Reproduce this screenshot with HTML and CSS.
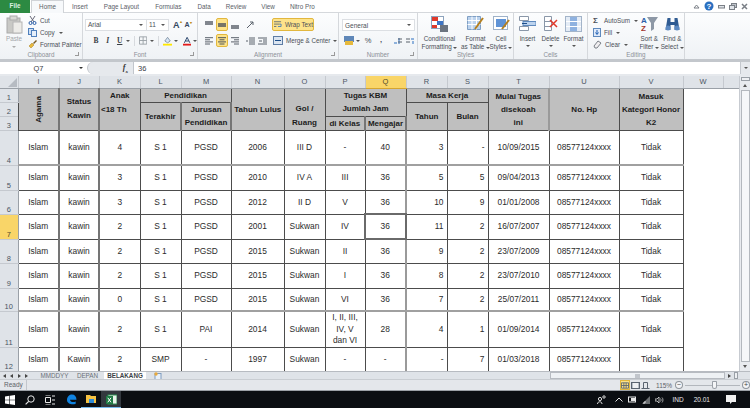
FILE: index.html
```html
<!DOCTYPE html>
<html lang="en">
<head>
<meta charset="utf-8">
<title>Microsoft Excel</title>
<link rel="stylesheet" href="styles.css">
</head>
<body>
<div class="app">
  <nav class="tabs">
    <span class="tab-file">File</span>
    <span class="tab-home">Home</span>
    <span class="tab t-insert">Insert</span>
    <span class="tab t-layout">Page Layout</span>
    <span class="tab t-formulas">Formulas</span>
    <span class="tab t-data">Data</span>
    <span class="tab t-review">Review</span>
    <span class="tab t-view">View</span>
    <span class="tab t-nitro">Nitro Pro</span>
    <span class="window-icons">
      <svg width="7" height="7" viewBox="0 0 7 7"><path d="M1 5 3.500 2 6 5z" fill="none" stroke="#7a7f86"/></svg>
      <svg width="10" height="10" viewBox="0 0 10 10"><circle cx="5" cy="5" r="4.500" fill="#2a6fc0"/><text x="5" y="7.800" class="help">?</text></svg>
      <svg width="7" height="7" viewBox="0 0 7 7"><rect x=".5" y="2.500" width="6" height="2.500" fill="#dfe3e8" stroke="#7a7f86"/></svg>
      <svg width="8" height="7" viewBox="0 0 8 7"><rect x="2.500" y=".5" width="5" height="4" fill="#bcc2c9" stroke="#7a7f86"/><rect x=".5" y="2.500" width="5" height="4" fill="#dfe3e8" stroke="#7a7f86"/></svg>
      <svg width="7" height="7" viewBox="0 0 7 7"><path d="M1 1 6 6M6 1 1 6" stroke="#7a7f86" stroke-width="1.500"/></svg>
    </span>
  </nav>

  <section class="ribbon">
    <div class="group g-clip">
      <div class="group-body clip-body">
        <div class="paste">
          <svg width="17" height="19" viewBox="0 0 17 19"><rect x="1" y="3" width="13" height="15" fill="#c9c9c6" stroke="#aaa"/><rect x="4" y="1" width="7" height="4" fill="#d9d9d6" stroke="#aaa"/><rect x="7" y="7" width="9" height="11" fill="#ecebe8" stroke="#b5b5b5"/></svg>
          <span class="paste-label">Paste</span>
          <span class="caret-gray"></span>
        </div>
        <div class="clip-list">
          <span class="clip-row"><svg width="9" height="9" viewBox="0 0 9 9"><path d="M2 0 6 6M7 0 3 6" stroke="#667" fill="none"/><circle cx="2.500" cy="7" r="1.500" fill="none" stroke="#2a5fa8"/><circle cx="6.500" cy="7" r="1.500" fill="none" stroke="#2a5fa8"/></svg>Cut</span>
          <span class="clip-row"><svg width="9" height="9" viewBox="0 0 9 9"><rect x=".5" y=".5" width="5" height="6" fill="#cfe0f5" stroke="#4f80bd"/><rect x="3.500" y="2.500" width="5" height="6" fill="#e6f0fb" stroke="#4f80bd"/></svg>Copy <i class="caret"></i></span>
          <span class="clip-row"><svg width="9" height="9" viewBox="0 0 9 9"><path d="M1 6 4 3 6 5 3 8z" fill="#e8b93c" stroke="#a77f20" stroke-width=".5"/><path d="M5 3 8 0 9 1 6 4z" fill="#7a5a20"/></svg>Format Painter</span>
        </div>
      </div>
      <div class="group-label">Clipboard<i class="launch"></i></div>
    </div>

    <div class="group g-font">
      <div class="group-body font-body">
        <div class="font-row">
          <span class="combo c-font">Arial<i class="caret"></i></span>
          <span class="combo c-size">11<i class="caret"></i></span>
          <span class="grow">A<sup>▴</sup></span>
          <span class="grow small">A<sup>▾</sup></span>
        </div>
        <div class="font-row fmt-row">
          <b class="fmt">B</b><em class="fmt">I</em><span class="fmt under">U</span><i class="caret"></i>
          <span class="vsep"></span>
          <svg class="b-icon" width="9" height="9" viewBox="0 0 9 9"><path d="M.5.5h8v8h-8zM4.500.5v8M.5 4.500h8" fill="none" stroke="#9aa0a6"/></svg><i class="caret"></i>
          <span class="vsep"></span>
          <svg class="fill-icon" width="10" height="10" viewBox="0 0 10 10"><path d="M2 5 5 1 8 5 5 7z" fill="#d8e6f5" stroke="#5c6f86" stroke-width=".7"/><rect y="8" width="10" height="2" fill="#ffe800"/></svg><i class="caret"></i>
          <svg class="color-icon" width="9" height="10" viewBox="0 0 9 10"><path d="M1.500 7 4.500 1 7.500 7M2.800 5h3.400" fill="none" stroke="#1f3b64"/><rect y="8" width="9" height="2" fill="#e31b1b"/></svg><i class="caret"></i>
        </div>
      </div>
      <div class="group-label">Font<i class="launch"></i></div>
    </div>

    <div class="group g-align">
      <div class="group-body align-body">
        <div class="align-grid">
          <span class="al"><svg width="8" height="8" viewBox="0 0 8 8"><path d="M0 1h8M0 3h8" stroke="#59606a" stroke-width="1.500"/></svg></span>
          <span class="al on"><svg width="8" height="8" viewBox="0 0 8 8"><path d="M0 3h8M0 5h8" stroke="#4b525c" stroke-width="1.500"/></svg></span>
          <span class="al"><svg width="8" height="8" viewBox="0 0 8 8"><path d="M0 5h8M0 7h8" stroke="#59606a" stroke-width="1.500"/></svg></span>
          <span class="al"><svg width="8" height="8" viewBox="0 0 8 8"><path d="M0 .7h8M0 2.800h5M0 4.900h8M0 7h5" stroke="#59606a"/></svg></span>
          <span class="al on"><svg width="8" height="8" viewBox="0 0 8 8"><path d="M0 .7h8M1.500 2.800h5M0 4.900h8M1.500 7h5" stroke="#4b525c"/></svg></span>
          <span class="al"><svg width="8" height="8" viewBox="0 0 8 8"><path d="M0 .7h8M3 2.800h5M0 4.900h8M3 7h5" stroke="#59606a"/></svg></span>
        </div>
        <div class="align-mid">
          <svg width="9" height="8" viewBox="0 0 9 8"><path d="M1 7 7 1M4 1h3v3" fill="none" stroke="#59606a"/></svg>
          <div class="indent-row">
            <svg width="9" height="8" viewBox="0 0 9 8"><path d="M3 1h6M3 3h6M3 5h6M3 7h6M0 4h2" stroke="#59606a"/></svg>
            <svg width="9" height="8" viewBox="0 0 9 8"><path d="M0 1h9M5 3h4M5 5h4M0 7h9M1 4h3" stroke="#59606a"/></svg>
          </div>
        </div>
        <div class="wrap-col">
          <span class="wrap on-wide"><svg width="10" height="9" viewBox="0 0 10 9"><path d="M0 1h9M0 4h7M0 7h3" stroke="#4b5b70"/><path d="M7 4h2v3H5" fill="none" stroke="#2a6fc0"/></svg>Wrap Text</span>
          <span class="wrap"><svg width="10" height="9" viewBox="0 0 10 9"><rect x=".5" y=".5" width="9" height="8" fill="#dbe5f1" stroke="#5e7da5"/><path d="M2 4.500h6" stroke="#1d4e89"/></svg>Merge &amp; Center <i class="caret"></i></span>
        </div>
      </div>
      <div class="group-label">Alignment<i class="launch"></i></div>
    </div>

    <div class="group g-number">
      <div class="group-body num-body">
        <span class="combo c-num">General<i class="caret"></i></span>
        <div class="num-row">
          <svg width="10" height="9" viewBox="0 0 10 9"><rect width="10" height="6" fill="#5f87b8"/><rect x="1" y="5" width="8" height="4" fill="#e6b93d"/></svg><i class="caret"></i>
          <span class="sym">%</span>
          <span class="sym comma">,</span>
          <svg class="dec" width="9" height="8" viewBox="0 0 9 8"><path d="M1 6h3M6 1v6" stroke="#2a6fc0"/><path d="M5 2h4M5 5h4" stroke="#59606a"/></svg>
          <svg class="dec2" width="9" height="8" viewBox="0 0 9 8"><path d="M0 2h4M0 5h4" stroke="#59606a"/><path d="M5 2h3M7 4v3" stroke="#2a6fc0"/></svg>
        </div>
      </div>
      <div class="group-label">Number<i class="launch"></i></div>
    </div>

    <div class="group g-styles">
      <div class="group-body big-body">
        <div class="big b-cond">
          <svg width="17" height="16" viewBox="0 0 17 16"><rect x=".5" y=".5" width="12" height="12" fill="#fff" stroke="#8da3bd"/><rect x="1" y="1" width="6" height="4" fill="#e0392b"/><rect x="6" y="5" width="6" height="4" fill="#3d74c4"/><rect x="1" y="9" width="5" height="3" fill="#e0392b"/><rect x="9" y="9" width="8" height="7" fill="#6c7480"/></svg>
          <span>Conditional</span><span>Formatting <i class="caret"></i></span>
        </div>
        <div class="big b-table">
          <svg width="17" height="16" viewBox="0 0 17 16"><path d="M.5.5h13v13H.5z" fill="#bcd3ee" stroke="#7f9fc4"/><path d="M.5 4.500h13M.5 8.500h13M5 .5v13M9.500.5v13" stroke="#fff"/><path d="M16 2 8 13" stroke="#b47f1f" stroke-width="2"/></svg>
          <span>Format</span><span>as Table <i class="caret"></i></span>
        </div>
        <div class="big b-cell">
          <svg width="17" height="16" viewBox="0 0 17 16"><rect x=".5" y=".5" width="14" height="13" fill="#fff" stroke="#9fb2c9"/><rect x="3" y="3" width="10" height="8" fill="#5f93d6"/><path d="M16 4 9 13" stroke="#b47f1f" stroke-width="2"/></svg>
          <span>Cell</span><span>Styles <i class="caret"></i></span>
        </div>
      </div>
      <div class="group-label">Styles</div>
    </div>

    <div class="group g-cells">
      <div class="group-body big-body">
        <div class="big b-ins">
          <svg width="17" height="16" viewBox="0 0 17 16"><path d="M.5.5h9v4h-9zM.5 10.500h9v4h-9z" fill="#fff" stroke="#8a97a8"/><rect x="4" y="5.500" width="13" height="4" fill="#bcd3ee" stroke="#5e89bd"/><path d="M3 7.500h5" stroke="#1d4e89"/></svg>
          <span>Insert</span><i class="caret"></i>
        </div>
        <div class="big b-del">
          <svg width="17" height="16" viewBox="0 0 17 16"><path d="M2.500.5h7v14h-7zM2.500 5.500h7M2.500 10.500h7" fill="#fff" stroke="#8a97a8"/><path d="M8 4 15 11M15 4 8 11" stroke="#e0392b" stroke-width="1.500"/></svg>
          <span>Delete</span><i class="caret"></i>
        </div>
        <div class="big b-fmt">
          <svg width="17" height="16" viewBox="0 0 17 16"><rect x=".5" y=".5" width="16" height="15" fill="#e4ecf6" stroke="#a3b4c9"/><rect x="5" y="1" width="7" height="14" fill="#8fb2e0"/><path d="M1 5.500h15M1 10.500h15" stroke="#fff"/></svg>
          <span>Format</span><i class="caret"></i>
        </div>
      </div>
      <div class="group-label">Cells</div>
    </div>

    <div class="group g-edit">
      <div class="group-body edit-body">
        <div class="edit-list">
          <span class="clip-row"><span class="sigma">Σ</span>AutoSum <i class="caret"></i></span>
          <span class="clip-row"><svg width="8" height="9" viewBox="0 0 8 9"><rect x=".5" y=".5" width="7" height="8" fill="#dfeafa" stroke="#5e89bd"/><path d="M4 2v4M2.500 4.500 4 6.500 5.500 4.500" fill="none" stroke="#1d5fb4"/></svg>Fill <i class="caret"></i></span>
          <span class="clip-row"><svg width="9" height="9" viewBox="0 0 9 9"><path d="M1 6 5 1l3 2-4 5H2z" fill="#f0eef0" stroke="#7b8088"/></svg>Clear <i class="caret"></i></span>
        </div>
        <div class="big b-sort">
          <svg width="17" height="16" viewBox="0 0 17 16"><text x="0" y="7" class="az a">A</text><text x="0" y="15" class="az z">Z</text><path d="M6 1h11l-4 6v6l-3 2V7z" fill="#8d98a6"/></svg>
          <span>Sort &amp;</span><span>Filter <i class="caret"></i></span>
        </div>
        <div class="big b-find">
          <svg width="16" height="16" viewBox="0 0 16 16"><path d="M3 2h3v4h4V2h3l2 12h-5V9H6v5H1z" fill="#2f5b92"/><circle cx="3.500" cy="12" r="2.500" fill="#5c89c2"/><circle cx="12.500" cy="12" r="2.500" fill="#5c89c2"/></svg>
          <span>Find &amp;</span><span>Select <i class="caret"></i></span>
        </div>
      </div>
      <div class="group-label">Editing</div>
    </div>
  </section>

  <div class="formula-bar">
    <span class="name-box">Q7<i class="caret"></i></span>
    <span class="fx-btns"><span class="pill"></span><em class="fx">f<sub>x</sub></em></span>
    <span class="formula">36</span>
    <span class="expand"><i class="caret"></i></span>
  </div>

  <div class="sheet">
    <div class="grid-wrap">
      <table class="grid">
        <colgroup>
          <col class="w-rh"><col class="w41"><col class="w40"><col class="w41"><col class="w41"><col class="w50"><col class="w53"><col class="w41"><col class="w40"><col class="w41"><col class="w41"><col class="w41"><col class="w61"><col class="w70"><col class="w64"><col class="w40"><col class="w16">
        </colgroup>
        <thead>
          <tr class="r-col">
            <th class="corner"><span class="tri"></span></th>
            <th class="ch">I</th><th class="ch">J</th><th class="ch">K</th><th class="ch">L</th><th class="ch">M</th><th class="ch">N</th><th class="ch">O</th><th class="ch">P</th><th class="ch sel">Q</th><th class="ch">R</th><th class="ch">S</th><th class="ch">T</th><th class="ch">U</th><th class="ch">V</th><th class="ch">W</th><th class="ch"></th>
          </tr>
        </thead>
        <tbody>
          <tr class="r14">
            <th class="rh">1</th>
            <td class="hd v-bar" rowspan="3"><span class="rot">Agama</span></td>
            <td class="hd v-bar l14" rowspan="3">Status<br>Kawin</td>
            <td class="hd top l14" rowspan="3">Anak<br><span class="lt">&lt;18 Th</span></td>
            <td class="hd" colspan="2">Pendidikan</td>
            <td class="hd" rowspan="3">Tahun Lulus</td>
            <td class="hd bottom l14" rowspan="3">Gol /<br>Ruang</td>
            <td class="hd" colspan="2" rowspan="2">Tugas KBM<br>Jumlah Jam</td>
            <td class="hd" colspan="2">Masa Kerja</td>
            <td class="hd" rowspan="3">Mulai Tugas<br>disekoah<br>ini</td>
            <td class="hd" rowspan="3">No. Hp</td>
            <td class="hd" rowspan="3">Masuk<br>Kategori Honor<br>K2</td>
            <td class="blank"></td><td class="blank"></td>
          </tr>
          <tr class="r14">
            <th class="rh">2</th>
            <td class="hd" rowspan="2">Terakhir</td>
            <td class="hd" rowspan="2">Jurusan<br>Pendidikan</td>
            <td class="hd" rowspan="2">Tahun</td>
            <td class="hd" rowspan="2">Bulan</td>
            <td class="blank"></td><td class="blank"></td>
          </tr>
          <tr class="r13 under-head">
            <th class="rh">3</th>
            <td class="hd">di Kelas</td>
            <td class="hd">Mengajar</td>
            <td class="blank"></td><td class="blank"></td>
          </tr>
          <tr class="r35 heavy">
            <th class="rh">4</th><td>Islam</td><td>kawin</td><td>4</td><td>S 1</td><td>PGSD</td><td>2006</td><td>III D</td><td>-</td><td>40</td><td class="n">3</td><td class="n">-</td><td>10/09/2015</td><td>08577124xxxx</td><td>Tidak</td><td class="blank"></td><td class="blank"></td>
          </tr>
          <tr class="r25">
            <th class="rh">5</th><td>Islam</td><td>kawin</td><td>3</td><td>S 1</td><td>PGSD</td><td>2010</td><td>IV A</td><td>III</td><td>36</td><td class="n">5</td><td class="n">5</td><td>09/04/2013</td><td>08577124xxxx</td><td>Tidak</td><td class="blank"></td><td class="blank"></td>
          </tr>
          <tr class="r24">
            <th class="rh">6</th><td>Islam</td><td>kawin</td><td>3</td><td>S 1</td><td>PGSD</td><td>2012</td><td>II D</td><td>V</td><td>36</td><td class="n">10</td><td class="n">9</td><td>01/01/2008</td><td>08577124xxxx</td><td>Tidak</td><td class="blank"></td><td class="blank"></td>
          </tr>
          <tr class="r25">
            <th class="rh sel">7</th><td>Islam</td><td>kawin</td><td>2</td><td>S 1</td><td>PGSD</td><td>2001</td><td>Sukwan</td><td>IV</td><td class="active">36</td><td class="n">11</td><td class="n">2</td><td>16/07/2007</td><td>08577124xxxx</td><td>Tidak</td><td class="blank"></td><td class="blank"></td>
          </tr>
          <tr class="r24">
            <th class="rh">8</th><td>Islam</td><td>kawin</td><td>2</td><td>S 1</td><td>PGSD</td><td>2015</td><td>Sukwan</td><td>II</td><td>36</td><td class="n">9</td><td class="n">2</td><td>23/07/2009</td><td>08577124xxxx</td><td>Tidak</td><td class="blank"></td><td class="blank"></td>
          </tr>
          <tr class="r25">
            <th class="rh">9</th><td>Islam</td><td>kawin</td><td>2</td><td>S 1</td><td>PGSD</td><td>2015</td><td>Sukwan</td><td>I</td><td>36</td><td class="n">8</td><td class="n">2</td><td>23/07/2010</td><td>08577124xxxx</td><td>Tidak</td><td class="blank"></td><td class="blank"></td>
          </tr>
          <tr class="r23 heavy">
            <th class="rh">10</th><td>Islam</td><td>kawin</td><td>0</td><td>S 1</td><td>PGSD</td><td>2015</td><td>Sukwan</td><td>VI</td><td>36</td><td class="n">7</td><td class="n">2</td><td>25/07/2011</td><td>08577124xxxx</td><td>Tidak</td><td class="blank"></td><td class="blank"></td>
          </tr>
          <tr class="r36">
            <th class="rh">11</th><td>Islam</td><td>kawin</td><td>2</td><td>S 1</td><td>PAI</td><td>2014</td><td>Sukwan</td><td class="tight">I, II, III,<br>IV, V<br>dan VI</td><td>28</td><td class="n">4</td><td class="n">1</td><td>01/09/2014</td><td>08577124xxxx</td><td>Tidak</td><td class="blank"></td><td class="blank"></td>
          </tr>
          <tr class="r24">
            <th class="rh">12</th><td>Islam</td><td>Kawin</td><td>2</td><td>SMP</td><td>-</td><td>1997</td><td>Sukwan</td><td>-</td><td>-</td><td class="n">-</td><td class="n">7</td><td>01/03/2018</td><td>08577124xxxx</td><td>Tidak</td><td class="blank"></td><td class="blank"></td>
          </tr>
        </tbody>
      </table>
    </div>
    <div class="vscroll">
      <span class="split-v"></span>
      <span class="tri-up"></span>
      <span class="v-thumb"></span>
      <span class="tri-down"></span>
    </div>
  </div>

  <div class="sheet-tabs">
    <span class="nav"><i class="nl"></i><i class="nl"></i><i class="nr"></i><i class="nr"></i></span>
    <span class="stab s1">MMDDYY</span>
    <span class="stab s2">DEPAN</span>
    <span class="stab active-tab">BELAKANG</span>
    <span class="stab new-sheet"><svg width="8" height="8" viewBox="0 0 8 8"><rect x="1" y="1.500" width="6" height="6" fill="#e9f0f8" stroke="#7e9cc0"/><circle cx="2" cy="2" r="1.700" fill="#e8a93c"/></svg></span>
    <span class="tab-fill"></span>
    <span class="h-track"><span class="grip"></span></span>
    <span class="h-end"><i class="nr"></i></span>
    <span class="split-h"></span>
  </div>

  <div class="status">
    <span class="ready">Ready</span>
    <span class="views">
      <span class="view on"><svg width="9" height="7" viewBox="0 0 9 7"><path d="M.5.5h8v6h-8zM3.200.5v6M5.800.5v6M.5 3.500h8" fill="none" stroke="#5a6470"/></svg></span>
      <span class="view"><svg width="9" height="7" viewBox="0 0 9 7"><rect x=".5" y=".5" width="8" height="6" fill="#b8bfc8" stroke="#5a6470"/><rect x="2" y="1" width="5" height="5" fill="#eef0f2"/></svg></span>
      <span class="view"><svg width="9" height="7" viewBox="0 0 9 7"><path d="M.5 6.500h8M2.500 6.500V.5h4v6" fill="none" stroke="#5a6470"/></svg></span>
    </span>
    <span class="zoom-pct">115%</span>
    <span class="zoom-btn">−</span>
    <span class="slider"><span class="knob"></span></span>
    <span class="zoom-btn">+</span>
  </div>

  <footer class="taskbar">
    <span class="tb win"><svg width="10" height="10" viewBox="0 0 10 10"><path d="M0 1.500 4.400.8v3.900H0zM5 .7 10 0v4.700H5zM0 5.300h4.400v3.900L0 8.500zM5 5.300h5V10l-5-.7z" fill="#fff"/></svg></span>
    <span class="tb"><svg width="10" height="10" viewBox="0 0 10 10"><circle cx="6" cy="4" r="3.200" fill="none" stroke="#e8e8e8"/><path d="M3.700 6.300 .6 9.400" stroke="#e8e8e8" stroke-width="1.200"/></svg></span>
    <span class="tb"><svg width="10" height="10" viewBox="0 0 10 10"><path d="M.5 2.500h5v5h-5zM7 1h3M7 5h3M7 9h3M.5 0h5M.5 10h5" fill="none" stroke="#e8e8e8"/></svg></span>
    <span class="tb edge"><svg width="11" height="11" viewBox="0 0 11 11"><path d="M1 6C1 2.500 3.500.5 6 .5c2.700 0 4.500 2 4.500 5.200H4c.2 2.600 3.600 3 5.700 1.700v2.300C6.500 11 1 10 1 6z" fill="#1083e0"/></svg></span>
    <span class="tb folder running"><svg width="11" height="10" viewBox="0 0 11 10"><path d="M0 1h4l1 1h5v7H0z" fill="#f5c242"/><rect x="3" y="5" width="5" height="4" fill="#2f8bd8"/></svg></span>
    <span class="tb xl running-on"><svg width="11" height="11" viewBox="0 0 11 11"><rect x="2" y="1" width="9" height="9" fill="#eaf3ec" stroke="#2f8f54"/><rect y="2" width="7" height="8" fill="#1f7a44"/><path d="M1.800 3.800 5 8.300M5 3.800 1.800 8.300" stroke="#fff"/></svg></span>
    <span class="tray">
      <svg width="9" height="9" viewBox="0 0 9 9"><circle cx="3" cy="4" r="1.600" fill="none" stroke="#ddd"/><path d="M.5 9c0-3 4.500-3 4.500 0" fill="none" stroke="#ddd"/><circle cx="7" cy="2" r="1.200" fill="none" stroke="#ddd"/></svg>
      <svg class="t-caret" width="8" height="5" viewBox="0 0 8 5"><path d="M.5 4.500 4 1l3.500 3.500" fill="none" stroke="#e8e8e8"/></svg>
      <svg width="9" height="7" viewBox="0 0 9 7"><rect x=".5" y="1" width="7" height="5" fill="none" stroke="#e8e8e8"/><rect x="3" y="2" width="4" height="3" fill="#e8e8e8"/></svg>
      <svg width="8" height="8" viewBox="0 0 8 8"><path d="M0 8 8 0v8z" fill="#6a6d70"/><path d="M1 7h2V5" fill="none" stroke="#ddd"/></svg>
      <svg width="9" height="8" viewBox="0 0 9 8"><path d="M0 3h2l2-2v6L2 5H0z" fill="none" stroke="#ddd" stroke-width=".8"/><path d="M5.500 2.500c.7.800.7 2.200 0 3M7 1.500c1.300 1.300 1.300 3.700 0 5" fill="none" stroke="#ddd" stroke-width=".7"/></svg>
      <span class="t-text t-ind">IND</span>
      <span class="t-text t-time">20.01</span>
      <svg class="t-note" width="10" height="9" viewBox="0 0 10 9"><path d="M0 0h10v7H6L4 9V7H0z" fill="#f0f0f0"/></svg>
    </span>
  </footer>
</div>
</body>
</html>
```

FILE: styles.css
```css
* { box-sizing: border-box; }
html, body { margin: 0; padding: 0; }
body { width: 750px; height: 408px; overflow: hidden; background: #fff; font-family: "Liberation Sans", Arial, sans-serif; }
.app { width: 750px; height: 408px; display: flex; flex-direction: column; overflow: hidden; background: #e6e9ed; color: #3c4148; }

/* tabs */
.tabs { height: 13px; flex: none; display: flex; align-items: center; background: #fff; font-size: 6.300px; color: #5a6068; border-bottom: 1px solid #d5d8dc; }
.tab-file { width: 30px; height: 13px; background: #2c8a42; color: #dff2e3; text-align: center; line-height: 12px; font-weight: bold; }
.tab-home { width: 33px; height: 13px; margin-left: 1px; background: #f7f9fb; border: 1px solid #d0d3d7; border-bottom: 0; text-align: center; line-height: 11px; }
.t-insert { margin-left: 8px; } .t-layout { margin-left: 16px; } .t-formulas { margin-left: 16px; } .t-data { margin-left: 16px; } .t-review { margin-left: 15px; } .t-view { margin-left: 15px; } .t-nitro { margin-left: 15px; }
.window-icons { margin-left: auto; margin-right: 2px; display: flex; align-items: center; gap: 4px; }
.help { font-size: 8px; font-weight: bold; fill: #fff; text-anchor: middle; }

/* ribbon */
.ribbon { height: 49px; flex: none; display: flex; background: linear-gradient(#fcfdfe, #eff2f5); border-bottom: 3px solid #c3c7cc; font-size: 6.300px; color: #4a4f57; }
.group { flex: none; display: flex; flex-direction: column; border-right: 1px solid #d5d8dc; height: 46px; }
.group-body { height: 37px; flex: none; }
.group-label { height: 9px; line-height: 9px; text-align: center; color: #8c9097; font-size: 6.300px; position: relative; }
.launch { position: absolute; right: 3px; top: 2px; width: 4px; height: 4px; border-right: 1px solid #999; border-bottom: 1px solid #999; }
.g-clip { width: 83px; } .g-font { width: 115px; } .g-align { width: 141px; } .g-number { width: 79px; } .g-styles { width: 96px; } .g-cells { width: 74px; } .g-edit { width: 97px; }
.caret { display: inline-block; width: 0; height: 0; flex: none; border: 2px solid transparent; border-top: 2px solid #555; border-bottom: 0; vertical-align: middle; font-style: normal; }
.caret-gray { width: 0; height: 0; border: 2px solid transparent; border-top: 2px solid #aaa; border-bottom: 0; margin-top: 3px; }

.clip-body { display: flex; padding: 2px 0 0 5px; }
.paste { width: 18px; display: flex; flex-direction: column; align-items: center; }
.paste-label { color: #a3a6aa; margin-top: 1px; line-height: 8px; }
.clip-list { margin-left: 5px; display: flex; flex-direction: column; gap: 3px; padding-top: 1px; color: #4a4f57; }
.clip-row { display: flex; align-items: center; gap: 3px; height: 9px; white-space: nowrap; }
.clip-row .caret { margin-left: 1px; }

.font-body { padding: 6px 0 0 2px; display: flex; flex-direction: column; gap: 5px; }
.font-row { display: flex; align-items: center; height: 11px; }
.combo { height: 12px; flex: none; background: #fff; border: 1px solid #dcdfe3; display: flex; align-items: center; justify-content: space-between; padding: 0 3px 0 2px; color: #4a4f57; font-size: 6.500px; }
.c-font { width: 62px; } .c-size { width: 23px; margin-left: -1px; }
.grow { font-size: 9px; font-weight: bold; color: #33475f; margin-left: 4px; display: flex; }
.grow.small { font-size: 7px; margin-left: 3px; }
.grow sup { font-size: 4px; color: #c08a20; line-height: 4px; }
.fmt-row { padding-left: 5px; }
.fmt { width: 13px; font-size: 7.500px; color: #3a3f46; text-align: center; font-family: "Liberation Serif", serif; font-weight: bold; }
.under { text-decoration: underline; }
.vsep { width: 1px; height: 10px; background: #d7dade; margin: 0 4px; }
.b-icon { margin-right: 3px; } .fill-icon { margin: 0 2px 0 0; } .color-icon { margin: 0 2px 0 5px; }

.align-body { display: flex; padding: 5px 0 0 5px; }
.align-grid { display: grid; grid-template-columns: repeat(3, 12px); grid-auto-rows: 13px; row-gap: 3px; column-gap: 1px; width: 43px; }
.al { display: flex; align-items: center; justify-content: center; }
.al.on { background: #fde38a; border: 1px solid #e2b73e; border-radius: 2px; }
.align-mid { width: 26px; display: flex; flex-direction: column; gap: 8px; padding-top: 3px; }
.indent-row { display: flex; gap: 3px; height: 8px; }
.wrap-col { display: flex; flex-direction: column; gap: 3px; }
.wrap { display: flex; align-items: center; gap: 3px; height: 13px; padding-left: 1px; white-space: nowrap; }
.on-wide { width: 42px; background: #fde38a; border: 1px solid #e2b73e; border-radius: 2px; }

.num-body { padding: 6px 0 0 3px; display: flex; flex-direction: column; gap: 4px; }
.c-num { width: 73px; }
.num-row { display: flex; align-items: center; height: 11px; padding-left: 2px; }
.num-row .caret { margin-left: 2px; }
.sym { font-size: 7.500px; margin-left: 4px; width: 8px; color: #4a4f57; text-align: center; }
.comma { margin-left: 5px; font-weight: bold; margin-top: -3px; }
.dec { margin-left: 8px; }
.dec2 { margin-left: 4px; }

.big-body, .edit-body { display: flex; justify-content: flex-start; padding-top: 3px; }
.big { display: flex; flex-direction: column; align-items: center; line-height: 7.500px; white-space: nowrap; }
.big svg { margin-bottom: 3px; height: 16px; width: 17px; }
.big .caret { margin: 2px 0 0; }
.b-cond { width: 37px; margin-left: 3px; } .b-table { width: 35px; } .b-cell { width: 20px; margin-left: -2px; }
.b-ins { width: 23px; margin-left: 2px; } .b-del { width: 23px; } .b-fmt { width: 23px; }
.edit-list { width: 46px; margin-left: 5px; display: flex; flex-direction: column; gap: 3px; }
.sigma { font-size: 8px; font-weight: bold; width: 8px; }
.b-sort { width: 23px; } .b-find { width: 24px; }

/* formula bar */
.formula-bar { height: 12px; flex: none; margin: 0 0 2px; display: flex; align-items: center; background: #fff; font-size: 7.500px; color: #3c4148; }
.name-box { width: 87px; height: 12px; display: flex; align-items: center; justify-content: center; position: relative; padding-right: 10px; background: #fff; }
.name-box .caret { position: absolute; right: 4px; top: 5px; border-top-color: #333; }
.fx-btns { width: 47px; height: 12px; display: flex; align-items: center; justify-content: space-between; background: #e6e9ed; padding-right: 5px; border-radius: 6px 0 0 6px; border: 1px solid #c2c6cc; border-width: 0 1px 0 1px; }
.pill { width: 16px; height: 10px; margin-left: 1px; }
.fx { font-family: "Liberation Serif", serif; font-weight: bold; font-size: 8px; color: #333; }
.fx sub { font-size: 5px; }
.formula { flex: 1; padding-left: 4px; }
.expand { width: 10px; height: 12px; display: flex; align-items: center; justify-content: center; background: #e6e9ed; border-left: 1px solid #c4c8ce; }

/* sheet */
.sheet { height: 295px; flex: none; display: flex; overflow: hidden; background: #fff; }
.grid-wrap { width: 739px; height: 295px; overflow: hidden; }
.grid { border-collapse: collapse; table-layout: fixed; width: 739px; font-size: 8.400px; color: #2b2b2b; }
.w-rh { width: 18px; } .w41 { width: 41px; } .w40 { width: 40px; } .w50 { width: 50px; } .w53 { width: 53px; } .w61 { width: 61px; } .w70 { width: 70px; } .w64 { width: 64px; } .w16 { width: 16px; }
.r-col { height: 12px; } .r13 { height: 13px; } .r14 { height: 14px; } .r23 { height: 23px; } .r24 { height: 24px; } .r25 { height: 25px; } .r35 { height: 35px; } .r36 { height: 36px; }
.r-col th { height: 12px; line-height: 10px; }
.corner { background: #dfe3e8; padding: 0; position: relative; border-right: 1px solid #c5c9cf; border-bottom: 1px solid #9aa0a7; }
.tri { position: absolute; right: 1px; bottom: 1px; width: 0; height: 0; border-left: 9px solid transparent; border-bottom: 9px solid #b6bbc2; }
.ch { background: #dfe3e8; font-weight: normal; font-size: 7.500px; color: #4b5563; text-align: center; padding: 0; border-right: 1px solid #c5c9cf; border-bottom: 1px solid #9aa0a7; }
.ch.sel { background: #f9d568; color: #4e4a2c; border-bottom-color: #d6a52e; }
.rh { background: #dfe3e8; font-weight: normal; font-size: 7.500px; color: #4b5563; text-align: center; vertical-align: bottom; padding: 0; line-height: 9px; border-right: 1px solid #9aa0a7; border-bottom: 1px solid #c5c9cf; }
.rh.sel { background: #f9d568; color: #4e4a2c; }
td { padding: 0; text-align: center; vertical-align: middle; border: 1px solid #4c4c4c; overflow: hidden; white-space: nowrap; line-height: 11px; }
tbody td:nth-child(2), tbody td:nth-child(3) { border-right: 2px solid #757575; }
tbody td:nth-child(10) { border-right: 2px solid #9a9a9a; }
.hd { background: #bfbfbf; color: #1c1c1c; font-size: 8px; font-weight: bold; line-height: 13px; border-color: #4c4c4c; }
.l14 { line-height: 14px; }
.v-bar { border-right: 2px solid #5f5f5f; }
.bottom { vertical-align: bottom; } .top { vertical-align: top; }
.lt { display: block; text-align: left; padding-left: 1px; }
.rot { display: inline-block; transform: rotate(-90deg); }
.under-head .hd { border-bottom: 1px solid #4c4c4c; }
.heavy td { border-bottom: 2px solid #a0a0a0; }
.heavy td.blank, td.blank { border: 0; background: #fff; }
.n { text-align: right; padding-right: 3px; }
.tight { line-height: 11.500px; white-space: normal; }
td.active { outline: 2px solid #6a6a6a; outline-offset: -1px; position: relative; }

.vscroll { width: 11px; flex: none; background: #e8ebef; display: flex; flex-direction: column; align-items: center; border-left: 1px solid #c7cbd1; }
.split-v { width: 9px; height: 4px; margin-top: 1px; background: #eef0f3; border: 1px solid #9aa0a7; }
.tri-up { width: 0; height: 0; margin: 3px 0; border: 2px solid transparent; border-bottom: 3px solid #555; border-top: 0; }
.v-thumb { width: 9px; flex: 1; background: #f5f7f9; border: 1px solid #b3b8be; }
.tri-down { width: 0; height: 0; margin: 3px 0; border: 2px solid transparent; border-top: 3px solid #555; border-bottom: 0; }

/* sheet tabs */
.sheet-tabs { height: 8px; flex: none; display: flex; align-items: stretch; background: #dfe3e8; font-size: 6.300px; color: #6b7078; border-top: 1px solid #b7bbc1; }
.nav { width: 36px; flex: none; display: flex; justify-content: space-between; align-items: center; padding: 0 8px 0 3px; }
.nl { width: 0; height: 0; border: 2px solid transparent; border-right: 3px solid #444; border-left: 0; }
.nr { display: block; width: 0; height: 0; border: 2px solid transparent; border-left: 3px solid #444; border-right: 0; }
.stab { line-height: 7px; padding: 0 3px; text-align: center; flex: none; }
.s1 { width: 37px; } .s2 { width: 29px; margin-left: 0; }
.active-tab { width: 42px; background: #fff; color: #3a3f46; font-weight: bold; margin-left: 2px; padding: 0; white-space: nowrap; }
.new-sheet { width: 23px; display: flex; align-items: center; justify-content: center; }
.tab-fill { flex: none; width: 381px; }
.h-track { width: 175px; flex: none; background: #eef1f4; border: 1px solid #b7bbc1; display: flex; align-items: center; justify-content: center; }
.grip { width: 5px; height: 4px; background: #c2c6cc; }
.h-end { width: 9px; flex: none; display: flex; align-items: center; justify-content: center; }
.split-h { width: 4px; flex: none; background: #eef0f3; border: 1px solid #9aa0a7; margin-right: 12px; }

/* status */
.status { height: 12px; flex: none; display: flex; align-items: center; background: #e4e7eb; font-size: 6.500px; color: #5d6269; border-top: 1px solid #c9cdd2; border-bottom: 1px solid #9ba0a6; }
.ready { width: 27px; flex: none; padding-left: 4px; border-right: 1px solid #c2c6cc; height: 10px; line-height: 10px; }
.views { margin-left: 593px; display: flex; gap: 0; }
.view { width: 10px; height: 10px; display: flex; align-items: center; justify-content: center; }
.view.on { background: #fde38a; border: 1px solid #e2b73e; }
.zoom-pct { margin-left: 6px; width: 17px; }
.zoom-btn { width: 8px; height: 8px; margin-left: 2px; border: 1px solid #8f959c; border-radius: 50%; font-size: 7px; line-height: 5px; text-align: center; background: #f3f4f6; color: #444; }
.slider { width: 56px; height: 1px; background: #b3b7bd; margin-left: 2px; position: relative; }
.knob { position: absolute; left: 27px; top: -4px; width: 5px; height: 8px; background: #f5f6f8; border: 1px solid #9aa0a7; border-radius: 1px 1px 3px 3px; }

/* taskbar */
.taskbar { flex: 1; display: flex; align-items: stretch; background: #0b0e12; color: #e8e8e8; padding-left: 0; }
.tb { width: 20px; display: flex; align-items: center; justify-content: center; }
.edge { margin-left: 1px; }
.running { border-bottom: 1px solid #76b9ed; }
.running-on { background: #33383e; border-bottom: 1px solid #76b9ed; }
.tray { margin-left: auto; display: flex; align-items: center; gap: 5px; font-size: 6.500px; padding-right: 14px; }
.t-caret { margin-left: 4px; } .t-ind { margin-left: 4px; } .t-time { margin-left: 5px; } .t-note { margin-left: 11px; }
.az { font-size: 8px; font-weight: bold; } .az.a { fill: #2a5fa8; } .az.z { fill: #a3362b; }
```
